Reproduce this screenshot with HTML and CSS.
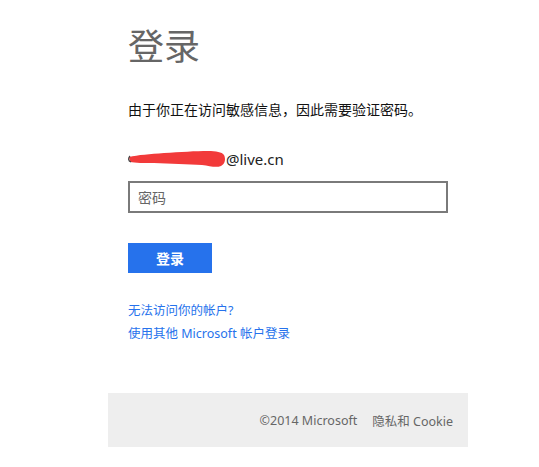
FILE: index.html
```html
<!DOCTYPE html>
<html lang="zh-CN">
<head>
    <meta charset="UTF-8">
    <meta name="viewport" content="width=device-width, initial-scale=1.0">
    <title>登录</title>
    <link rel="stylesheet" href="styles.css">
</head>
<body>
    <div class="page">
        <div class="content">
            <h1 class="title">登录</h1>
            <p class="notice">由于你正在访问敏感信息，因此需要验证密码。</p>
            <div class="account">
                <svg class="scribble" width="98" height="18" viewBox="0 0 98 18">
                    <path d="M1 7 C10 5 22 4 36 3 C52 2 68 1 80 1 C88 1 94 2 96 5 C98 9 97 14 93 16 C88 18 82 16 74 15 C60 14 42 14 26 13 C16 13 7 13 2 12 Z" fill="#f23a3a"/>
                    <path d="M2 6 C0 8 0 11 3 12" stroke="#444" stroke-width="1.2" fill="none"/>
                </svg><span class="domain">@live.cn</span>
            </div>
            <input class="password" type="password" placeholder="密码">
            <button class="submit">登录</button>
            <div class="links">
                <a href="#">无法访问你的帐户?</a>
                <a href="#">使用其他 Microsoft 帐户登录</a>
            </div>
        </div>
        <div class="footer">
            <span>©2014 Microsoft</span>
            <a href="#">隐私和 Cookie</a>
        </div>
    </div>
</body>
</html>
```

FILE: styles.css
```css
body {
    margin: 0;
    font-family: "Noto Sans", "Noto Sans CJK SC", sans-serif;
    background-color: white;
    color: #000;
}
.page {
    width: 360px;
    margin-left: 108px;
}
.content {
    padding: 24px 20px 0;
}
.title {
    margin: 0;
    font-size: 36px;
    line-height: 46px;
    font-weight: normal;
    color: #666;
}
.notice {
    margin: 30px 0 0;
    font-size: 14px;
    line-height: 20px;
    color: #111;
}
.account {
    display: flex;
    align-items: center;
    margin-top: 29px;
    height: 20px;
    font-size: 15px;
    color: #222;
}
.scribble {
    display: block;
}
.password {
    display: block;
    width: 100%;
    height: 32px;
    margin-top: 12px;
    padding: 0 8px;
    border: 2px solid #7a7a7a;
    box-sizing: border-box;
    font-family: inherit;
    font-size: 14px;
    outline: none;
}
.password::placeholder {
    color: #666;
}
.submit {
    display: block;
    width: 84px;
    height: 30px;
    margin-top: 30px;
    border: none;
    background-color: #2672ec;
    color: white;
    font-family: inherit;
    font-size: 14px;
    font-weight: bold;
    padding: 0;
}
.links {
    margin-top: 26px;
    display: flex;
    flex-direction: column;
}
.links a {
    font-size: 12.5px;
    line-height: 23px;
    color: #2672ec;
    text-decoration: none;
    align-self: flex-start;
}
.footer {
    margin-top: 48px;
    height: 54px;
    background-color: #eee;
    display: flex;
    align-items: center;
    justify-content: flex-end;
    gap: 15px;
    padding-right: 15px;
    font-size: 12.5px;
    color: #666;
}
.footer a {
    color: #666;
    text-decoration: none;
}
```
